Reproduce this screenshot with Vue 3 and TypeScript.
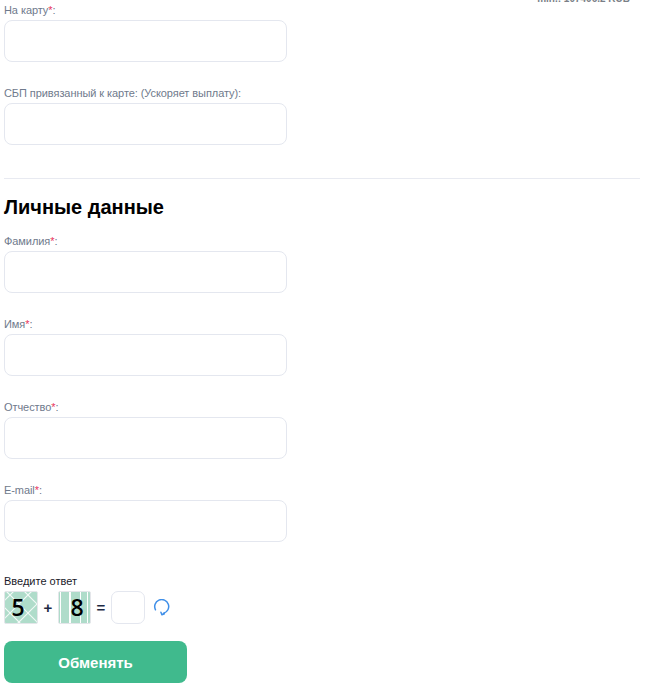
<script setup lang="ts">
interface Field { label: string; required: boolean }
const payout: Field[] = [
  { label: 'На карту', required: true },
  { label: 'СБП привязанный к карте: (Ускоряет выплату)', required: false },
]
const personal: Field[] = [
  { label: 'Фамилия', required: true },
  { label: 'Имя', required: true },
  { label: 'Отчество', required: true },
  { label: 'E-mail', required: true },
]
const crossLines: [number, number, number, number][] = [
  [-2, 10, 10, -2], [-2, 28, 28, -2], [-2, 46, 46, -2],
  [-2, -4, 36, 34], [-2, -22, 36, 16], [-2, 14, 22, 38],
]
</script>

<template>
  <main class="page">
    <p class="limit">min.: 107406.2 RUB</p>
    <section class="group">
      <div v-for="f in payout" :key="f.label" class="field">
        <label class="label">{{ f.label }}<span v-if="f.required" class="req">*</span>:</label>
        <input class="input" type="text" />
      </div>
    </section>
    <hr class="divider" />
    <h2 class="title">Личные данные</h2>
    <section class="group">
      <div v-for="f in personal" :key="f.label" class="field">
        <label class="label">{{ f.label }}<span v-if="f.required" class="req">*</span>:</label>
        <input class="input" type="text" />
      </div>
    </section>
    <div class="captcha">
      <div class="captcha-label">Введите ответ</div>
      <div class="captcha-row">
        <span class="tile tile-cross">
          <svg class="tile-bg" viewBox="0 0 32 31" width="32" height="31" stroke="#fff" stroke-width="1.2" opacity="0.85">
            <line v-for="(l, i) in crossLines" :key="i" :x1="l[0]" :y1="l[1]" :x2="l[2]" :y2="l[3]" />
          </svg>
          <span class="digit">5</span>
        </span>
        <span class="op">+</span>
        <span class="tile tile-stripe"><span class="digit">8</span></span>
        <span class="op">=</span>
        <input class="answer" type="text" />
        <svg class="refresh" viewBox="0 0 18 18" width="18" height="18" fill="none" stroke="#3f8fe8" stroke-width="1.5" stroke-linecap="round" stroke-linejoin="round">
          <path d="M2.5 10.8A7 7 0 1 1 10.6 14.3" />
          <path d="M7.9 13.2 8.9 15.8 11.4 14.7" />
        </svg>
      </div>
    </div>
    <button class="submit" type="button">Обменять</button>
  </main>
</template>

<style scoped>
.page {
  width: 657px;
  height: 687px;
  overflow: hidden;
  box-sizing: border-box;
  padding: 0 17px 0 4px;
  font-family: "Liberation Sans", Arial, sans-serif;
  display: flex;
  flex-direction: column;
}
.limit {
  flex-shrink: 0;
  margin: -7px 10px -5px 0;
  height: 11px;
  line-height: 11px;
  font-size: 10px;
  font-weight: 700;
  color: #7a7f87;
  text-align: right;
}
.group {
  display: flex;
  flex-direction: column;
  gap: 20px;
  flex-shrink: 0;
}
.field {
  display: flex;
  flex-direction: column;
}
.label {
  height: 21px;
  line-height: 23px;
  font-size: 11px;
  letter-spacing: -0.07px;
  color: #6f7a8c;
}
.req {
  color: #e8365d;
}
.input {
  box-sizing: border-box;
  width: 283px;
  height: 42px;
  border: 1px solid #e4e7ef;
  border-radius: 8px;
  background: #fff;
  outline: none;
}
.divider {
  flex-shrink: 0;
  width: 100%;
  height: 1px;
  margin: 33px 0 0;
  border: 0;
  background: #e8eaf1;
}
.title {
  flex-shrink: 0;
  margin: 16px 0 11px;
  font-size: 20px;
  line-height: 24px;
  font-weight: 700;
  color: #000;
}
.captcha {
  flex-shrink: 0;
  margin-top: 33px;
}
.captcha-label {
  font-size: 11px;
  line-height: 13px;
  color: #1a1a2a;
}
.captcha-row {
  display: flex;
  align-items: center;
  margin-top: 3px;
}
.tile {
  position: relative;
  box-sizing: border-box;
  display: flex;
  align-items: center;
  justify-content: center;
  width: 34px;
  height: 33px;
  padding-bottom: 2px;
  border-radius: 2px;
  border: 1px solid #e4e6ea;
  overflow: hidden;
  font-family: "Open Sans", "Noto Sans", sans-serif;
  font-size: 23px;
  font-weight: 600;
  color: #000;
}
.tile-bg {
  position: absolute;
  left: 0;
  top: 0;
}
.digit {
  position: relative;
}
.tile-cross {
  padding-right: 6px;
  background-color: #afdcca;
}
.tile-stripe {
  width: 33px;
  padding-left: 5px;
  background-color: #afdcca;
  background-image: linear-gradient(90deg,
    #afdcca 0 1px, #fff 1px 2px, #afdcca 2px 10px, #fff 10px 12px, #afdcca 12px 21px, #fff 21px 22px, #afdcca 22px 28px, #fff 28px 29px, #afdcca 29px);
}
.op {
  width: 20px;
  text-align: center;
  font-size: 15px;
  font-weight: 700;
  color: #1d2a44;
}
.answer {
  box-sizing: border-box;
  width: 34px;
  height: 33px;
  border: 1px solid #e4e7ef;
  border-radius: 7px;
  background: #fff;
  outline: none;
}
.refresh {
  margin-left: 8px;
}
.submit {
  flex-shrink: 0;
  width: 183px;
  height: 42px;
  margin-top: 17px;
  border: 0;
  border-radius: 8px;
  background: #40ba8d;
  color: #fff;
  font-family: "Liberation Sans", Arial, sans-serif;
  font-size: 15px;
  font-weight: 700;
}
</style>
